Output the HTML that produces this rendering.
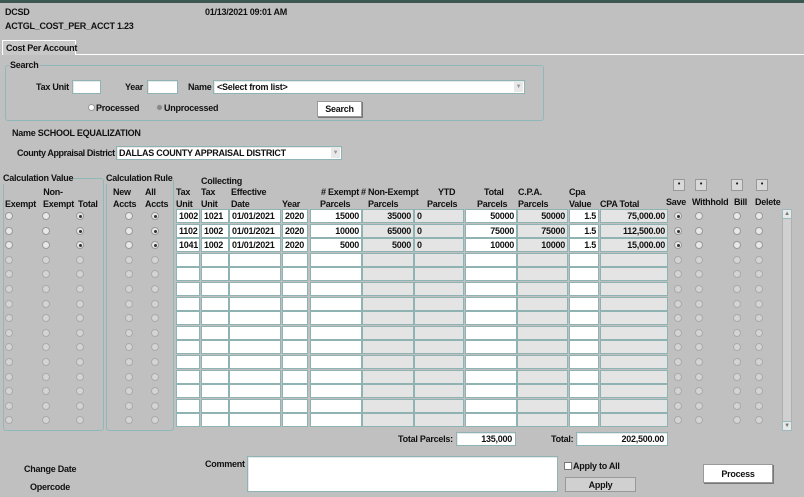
<!DOCTYPE html>
<html><head><meta charset="utf-8"><style>
*{box-sizing:border-box;margin:0;padding:0}
body{width:804px;height:497px;background:#c0c0c0;position:relative;overflow:hidden;font:bold 9px/11px "Liberation Sans",Arial,sans-serif;letter-spacing:-0.25px;color:#111}
.a{position:absolute;white-space:nowrap}
.in{position:absolute;background:#fff;border:1px solid #8fb3b3;box-shadow:inset 1px 1px 0 #e8e8e8}
.box{position:absolute;border:1px solid #8fb8b8;border-radius:3px}
.r{position:absolute;left:0;width:804px;height:13px}
.r i{position:absolute;top:0;height:14px;background:#fff;border:1px solid #8fb3b3;font-style:normal;padding:1px 2px 0;font-size:9px;line-height:11px;overflow:hidden}
.r i.g{background:#e4e4e4}
.c1{left:176px;width:24px}.c2{left:201px;width:28px}.c3{left:229px;width:52px}.c4{left:282px;width:26px}.c5{left:310px;width:52px;text-align:right}.c6{left:362px;width:52px;text-align:right}.c7{left:414px;width:50px}.c8{left:465px;width:52px;text-align:right}.c9{left:517px;width:51px;text-align:right}.c10{left:569px;width:30px;text-align:right}.c11{left:600px;width:68px;text-align:right}
.r b{position:absolute;top:3px;width:8px;height:8px;border-radius:50%;background:#e8e8e8;border:1px solid #999}
.r b.on::after{content:"";position:absolute;left:1.5px;top:1.5px;width:3px;height:3px;border-radius:50%;background:#333}
.r.e b{background:#d4d4d4;border-color:#aaa}
.x1{left:5px}.x2{left:42px}.x3{left:76px}.x4{left:125px}.x5{left:151px}.x6{left:674px}.x7{left:695px}.x8{left:733px}.x9{left:755px}
.btn{position:absolute;background:#fff;border:1px solid #999;box-shadow:1px 1px 0 #777;text-align:center}
.sq{position:absolute;top:179px;width:12px;height:12px;border:1px solid #999;background:#d8d8d8;font-size:7px;line-height:9px;text-align:center}
.h{text-align:center}
</style></head><body>
<div class="a" style="left:0;top:0;width:804px;height:3px;background:#3a5752"></div>
<div class="a" style="left:5px;top:7px">DCSD</div>
<div class="a" style="left:205px;top:7px">01/13/2021 09:01 AM</div>
<div class="a" style="left:5px;top:21px">ACTGL_COST_PER_ACCT 1.23</div>
<div class="a" style="left:2px;top:40px;width:74px;height:15px;border:1px solid #fff;border-bottom:none;background:#c8c8c8;padding:2px 0 0 3px">Cost Per Account</div>
<div class="a" style="left:76px;top:54px;width:728px;height:1px;background:#fff"></div>
<div class="box" style="left:5px;top:65px;width:539px;height:56px"></div>
<div class="a" style="left:9px;top:60px;background:#c0c0c0;padding:0 1px">Search</div>
<div class="a" style="left:36px;top:82px">Tax Unit</div>
<div class="in" style="left:72px;top:80px;width:29px;height:14px"></div>
<div class="a" style="left:125px;top:82px">Year</div>
<div class="in" style="left:147px;top:80px;width:31px;height:14px"></div>
<div class="a" style="left:188px;top:82px">Name</div>
<div class="in" style="left:213px;top:80px;width:312px;height:14px;padding:1px 3px">&lt;Select from list&gt;<span style="position:absolute;right:1px;top:1px;width:9px;height:10px;background:#e8e8e8;color:#999;font-size:6px;text-align:center">▼</span></div>
<div class="a" style="left:88px;top:104px;width:7px;height:7px;border-radius:50%;background:#fff;border:1px solid #999"></div>
<div class="a" style="left:96px;top:103px">Processed</div>
<div class="a" style="left:156px;top:104px;width:7px;height:7px;border-radius:50%;background:#888;border:1px solid #bbb"></div>
<div class="a" style="left:164px;top:103px">Unprocessed</div>
<div class="btn" style="left:317px;top:101px;width:45px;height:16px;padding-top:2px">Search</div>
<div class="a" style="left:12px;top:128px">Name <span>SCHOOL EQUALIZATION</span></div>
<div class="a" style="left:17px;top:148px;letter-spacing:-0.4px">County Appraisal District</div>
<div class="in" style="left:116px;top:146px;width:226px;height:14px;padding:1px 2px;font-size:9px">DALLAS COUNTY APPRAISAL DISTRICT<span style="position:absolute;right:1px;top:1px;width:9px;height:10px;background:#e8e8e8;color:#999;font-size:6px;text-align:center">▼</span></div>

<div class="box" style="left:3px;top:178px;width:101px;height:253px"></div>
<div class="a" style="left:3px;top:173px;background:#c0c0c0">Calculation Value</div>
<div class="box" style="left:106px;top:178px;width:68px;height:253px"></div>
<div class="a" style="left:106px;top:173px;background:#c0c0c0">Calculation Rule</div>
<div class="a h" style="left:33px;top:187px;width:40px">Non-</div>
<div class="a" style="left:5px;top:199px">Exempt</div>
<div class="a" style="left:43px;top:199px">Exempt</div>
<div class="a" style="left:78px;top:199px">Total</div>
<div class="a" style="left:113px;top:187px">New</div><div class="a" style="left:113px;top:199px">Accts</div>
<div class="a" style="left:145px;top:187px">All</div><div class="a" style="left:145px;top:199px">Accts</div>
<div class="a" style="left:201px;top:176px">Collecting</div>
<div class="a" style="left:176px;top:187px">Tax</div><div class="a" style="left:176px;top:199px">Unit</div>
<div class="a" style="left:201px;top:187px">Tax</div><div class="a" style="left:201px;top:199px">Unit</div>
<div class="a" style="left:231px;top:187px">Effective</div><div class="a" style="left:231px;top:199px">Date</div>
<div class="a" style="left:282px;top:199px">Year</div>
<div class="a" style="left:312px;top:187px;width:47px;text-align:right"># Exempt</div><div class="a" style="left:320px;top:199px">Parcels</div>
<div class="a" style="left:361px;top:187px"># Non-Exempt</div><div class="a" style="left:368px;top:199px">Parcels</div>
<div class="a" style="left:438px;top:187px">YTD</div><div class="a" style="left:427px;top:199px">Parcels</div>
<div class="a" style="left:484px;top:187px">Total</div><div class="a" style="left:477px;top:199px">Parcels</div>
<div class="a" style="left:518px;top:187px">C.P.A.</div><div class="a" style="left:518px;top:199px">Parcels</div>
<div class="a" style="left:569px;top:187px">Cpa</div><div class="a" style="left:569px;top:199px">Value</div>
<div class="a" style="left:600px;top:199px">CPA Total</div>
<div class="sq" style="left:673px">•</div><div class="sq" style="left:695px">•</div><div class="sq" style="left:731px">•</div><div class="sq" style="left:756px">•</div>
<div class="a" style="left:666px;top:197px">Save</div><div class="a" style="left:692px;top:197px">Withhold</div><div class="a" style="left:734px;top:197px">Bill</div><div class="a" style="left:755px;top:197px">Delete</div>

<div class="r" style="top:209px"><b class="x1"></b><b class="x2"></b><b class="x3 on"></b><b class="x4"></b><b class="x5 on"></b><i class="c1">1002</i><i class="c2">1021</i><i class="c3">01/01/2021</i><i class="c4">2020</i><i class="c5">15000</i><i class="c6 g">35000</i><i class="c7 g">0</i><i class="c8">50000</i><i class="c9 g">50000</i><i class="c10">1.5</i><i class="c11 g">75,000.00</i><b class="x6 on"></b><b class="x7"></b><b class="x8"></b><b class="x9"></b></div>
<div class="r" style="top:224px"><b class="x1"></b><b class="x2"></b><b class="x3 on"></b><b class="x4"></b><b class="x5 on"></b><i class="c1">1102</i><i class="c2">1002</i><i class="c3">01/01/2021</i><i class="c4">2020</i><i class="c5">10000</i><i class="c6 g">65000</i><i class="c7 g">0</i><i class="c8">75000</i><i class="c9 g">75000</i><i class="c10">1.5</i><i class="c11 g">112,500.00</i><b class="x6 on"></b><b class="x7"></b><b class="x8"></b><b class="x9"></b></div>
<div class="r" style="top:238px"><b class="x1"></b><b class="x2"></b><b class="x3 on"></b><b class="x4"></b><b class="x5 on"></b><i class="c1">1041</i><i class="c2">1002</i><i class="c3">01/01/2021</i><i class="c4">2020</i><i class="c5">5000</i><i class="c6 g">5000</i><i class="c7 g">0</i><i class="c8">10000</i><i class="c9 g">10000</i><i class="c10">1.5</i><i class="c11 g">15,000.00</i><b class="x6 on"></b><b class="x7"></b><b class="x8"></b><b class="x9"></b></div>
<div class="r e" style="top:253px"><b class="x1"></b><b class="x2"></b><b class="x3"></b><b class="x4"></b><b class="x5"></b><i class="c1"></i><i class="c2"></i><i class="c3"></i><i class="c4"></i><i class="c5"></i><i class="c6 g"></i><i class="c7 g"></i><i class="c8"></i><i class="c9 g"></i><i class="c10"></i><i class="c11 g"></i><b class="x6"></b><b class="x7"></b><b class="x8"></b><b class="x9"></b></div>
<div class="r e" style="top:267px"><b class="x1"></b><b class="x2"></b><b class="x3"></b><b class="x4"></b><b class="x5"></b><i class="c1"></i><i class="c2"></i><i class="c3"></i><i class="c4"></i><i class="c5"></i><i class="c6 g"></i><i class="c7 g"></i><i class="c8"></i><i class="c9 g"></i><i class="c10"></i><i class="c11 g"></i><b class="x6"></b><b class="x7"></b><b class="x8"></b><b class="x9"></b></div>
<div class="r e" style="top:282px"><b class="x1"></b><b class="x2"></b><b class="x3"></b><b class="x4"></b><b class="x5"></b><i class="c1"></i><i class="c2"></i><i class="c3"></i><i class="c4"></i><i class="c5"></i><i class="c6 g"></i><i class="c7 g"></i><i class="c8"></i><i class="c9 g"></i><i class="c10"></i><i class="c11 g"></i><b class="x6"></b><b class="x7"></b><b class="x8"></b><b class="x9"></b></div>
<div class="r e" style="top:297px"><b class="x1"></b><b class="x2"></b><b class="x3"></b><b class="x4"></b><b class="x5"></b><i class="c1"></i><i class="c2"></i><i class="c3"></i><i class="c4"></i><i class="c5"></i><i class="c6 g"></i><i class="c7 g"></i><i class="c8"></i><i class="c9 g"></i><i class="c10"></i><i class="c11 g"></i><b class="x6"></b><b class="x7"></b><b class="x8"></b><b class="x9"></b></div>
<div class="r e" style="top:311px"><b class="x1"></b><b class="x2"></b><b class="x3"></b><b class="x4"></b><b class="x5"></b><i class="c1"></i><i class="c2"></i><i class="c3"></i><i class="c4"></i><i class="c5"></i><i class="c6 g"></i><i class="c7 g"></i><i class="c8"></i><i class="c9 g"></i><i class="c10"></i><i class="c11 g"></i><b class="x6"></b><b class="x7"></b><b class="x8"></b><b class="x9"></b></div>
<div class="r e" style="top:326px"><b class="x1"></b><b class="x2"></b><b class="x3"></b><b class="x4"></b><b class="x5"></b><i class="c1"></i><i class="c2"></i><i class="c3"></i><i class="c4"></i><i class="c5"></i><i class="c6 g"></i><i class="c7 g"></i><i class="c8"></i><i class="c9 g"></i><i class="c10"></i><i class="c11 g"></i><b class="x6"></b><b class="x7"></b><b class="x8"></b><b class="x9"></b></div>
<div class="r e" style="top:340px"><b class="x1"></b><b class="x2"></b><b class="x3"></b><b class="x4"></b><b class="x5"></b><i class="c1"></i><i class="c2"></i><i class="c3"></i><i class="c4"></i><i class="c5"></i><i class="c6 g"></i><i class="c7 g"></i><i class="c8"></i><i class="c9 g"></i><i class="c10"></i><i class="c11 g"></i><b class="x6"></b><b class="x7"></b><b class="x8"></b><b class="x9"></b></div>
<div class="r e" style="top:355px"><b class="x1"></b><b class="x2"></b><b class="x3"></b><b class="x4"></b><b class="x5"></b><i class="c1"></i><i class="c2"></i><i class="c3"></i><i class="c4"></i><i class="c5"></i><i class="c6 g"></i><i class="c7 g"></i><i class="c8"></i><i class="c9 g"></i><i class="c10"></i><i class="c11 g"></i><b class="x6"></b><b class="x7"></b><b class="x8"></b><b class="x9"></b></div>
<div class="r e" style="top:370px"><b class="x1"></b><b class="x2"></b><b class="x3"></b><b class="x4"></b><b class="x5"></b><i class="c1"></i><i class="c2"></i><i class="c3"></i><i class="c4"></i><i class="c5"></i><i class="c6 g"></i><i class="c7 g"></i><i class="c8"></i><i class="c9 g"></i><i class="c10"></i><i class="c11 g"></i><b class="x6"></b><b class="x7"></b><b class="x8"></b><b class="x9"></b></div>
<div class="r e" style="top:384px"><b class="x1"></b><b class="x2"></b><b class="x3"></b><b class="x4"></b><b class="x5"></b><i class="c1"></i><i class="c2"></i><i class="c3"></i><i class="c4"></i><i class="c5"></i><i class="c6 g"></i><i class="c7 g"></i><i class="c8"></i><i class="c9 g"></i><i class="c10"></i><i class="c11 g"></i><b class="x6"></b><b class="x7"></b><b class="x8"></b><b class="x9"></b></div>
<div class="r e" style="top:399px"><b class="x1"></b><b class="x2"></b><b class="x3"></b><b class="x4"></b><b class="x5"></b><i class="c1"></i><i class="c2"></i><i class="c3"></i><i class="c4"></i><i class="c5"></i><i class="c6 g"></i><i class="c7 g"></i><i class="c8"></i><i class="c9 g"></i><i class="c10"></i><i class="c11 g"></i><b class="x6"></b><b class="x7"></b><b class="x8"></b><b class="x9"></b></div>
<div class="r e" style="top:413px"><b class="x1"></b><b class="x2"></b><b class="x3"></b><b class="x4"></b><b class="x5"></b><i class="c1"></i><i class="c2"></i><i class="c3"></i><i class="c4"></i><i class="c5"></i><i class="c6 g"></i><i class="c7 g"></i><i class="c8"></i><i class="c9 g"></i><i class="c10"></i><i class="c11 g"></i><b class="x6"></b><b class="x7"></b><b class="x8"></b><b class="x9"></b></div>

<div class="a" style="left:782px;top:209px;width:10px;height:222px;background:#d0d0d0;border:1px solid #b0b0b0"></div>
<div class="a" style="left:782px;top:209px;width:10px;height:10px;background:#e8e8e8;border:1px solid #9bb;font-size:6px;line-height:8px;text-align:center;color:#777">▲</div>
<div class="a" style="left:782px;top:421px;width:10px;height:10px;background:#e8e8e8;border:1px solid #9bb;font-size:6px;line-height:8px;text-align:center;color:#777">▼</div>

<div class="a" style="left:398px;top:434px">Total Parcels:</div>
<div class="in" style="left:456px;top:432px;width:60px;height:14px;text-align:right;padding:1px 3px">135,000</div>
<div class="a" style="left:551px;top:434px">Total:</div>
<div class="in" style="left:576px;top:432px;width:92px;height:14px;text-align:right;padding:1px 3px">202,500.00</div>
<div class="a" style="left:24px;top:464px">Change Date</div>
<div class="a" style="left:30px;top:482px">Opercode</div>
<div class="a" style="left:205px;top:459px">Comment</div>
<div class="in" style="left:247px;top:456px;width:311px;height:36px"></div>
<div class="a" style="left:564px;top:462px;width:8px;height:8px;background:#fff;border:1px solid #777"></div>
<div class="a" style="left:573px;top:461px">Apply to All</div>
<div class="a" style="left:565px;top:477px;width:71px;height:15px;background:#d0d0d0;border:1px solid #999;text-align:center;padding-top:2px">Apply</div>
<div class="btn" style="left:703px;top:464px;width:70px;height:19px;padding-top:4px">Process</div>
</body></html>
